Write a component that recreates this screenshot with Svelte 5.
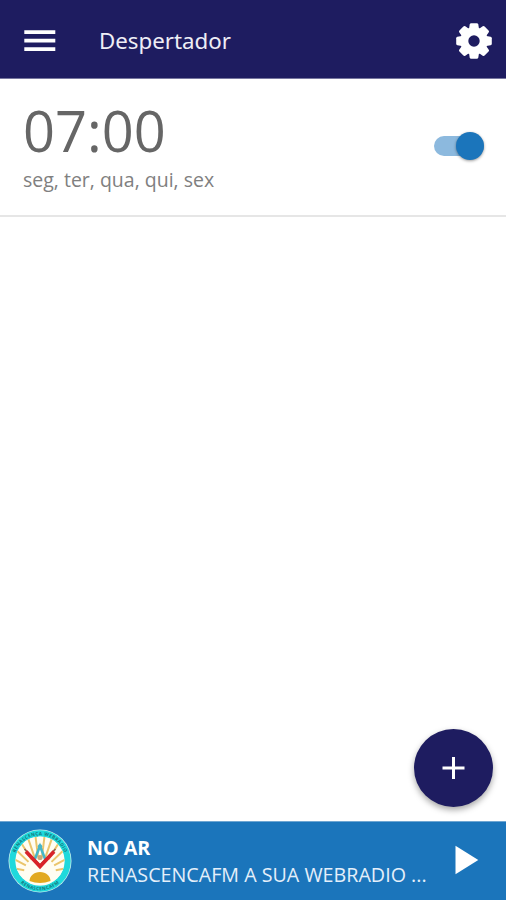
<script lang="ts">
  interface Alarm {
    time: string;
    days: string[];
    enabled: boolean;
  }

  let alarms = $state<Alarm[]>([
    { time: "07:00", days: ["seg", "ter", "qua", "qui", "sex"], enabled: true },
  ]);
  let playing = $state(false);

  const teeth = [0, 45, 90, 135, 180, 225, 270, 315];
  const rays = [-80, -62, -46, -32, -19, -7, 7, 19, 32, 46, 62, 80];

  function addAlarm() {
    alarms.push({ time: "07:00", days: ["seg"], enabled: false });
  }
</script>

<div class="screen">
  <header>
    <button class="menu" aria-label="Menu">
      <svg width="32" height="22" viewBox="0 0 32 22">
        <path d="M0.3 2.2H31.3M0.3 10.7H31.3M0.3 19.2H31.3" stroke="#fff" stroke-width="3.8" />
      </svg>
    </button>
    <h1>Despertador</h1>
    <button class="settings" aria-label="Configurações">
      <svg width="36" height="36" viewBox="-18 -18 36 36">
        {#each teeth as angle}
          <path
            d="M-5.2 -11L-4.3 -16.6Q-4 -17.8 -2.8 -17.8H2.8Q4 -17.8 4.3 -16.6L5.2 -11Z"
            fill="#fff"
            transform="rotate({angle})"
          />
        {/each}
        <circle r="9.7" fill="none" stroke="#fff" stroke-width="8" />
      </svg>
    </button>
  </header>

  <main>
    {#each alarms as alarm}
      <div class="alarm">
        <div class="info">
          <span class="time">{alarm.time}</span>
          <span class="days">{alarm.days.join(", ")}</span>
        </div>
        <button
          class="switch"
          class:on={alarm.enabled}
          role="switch"
          aria-checked={alarm.enabled}
          aria-label="Ativar alarme"
          onclick={() => (alarm.enabled = !alarm.enabled)}
        >
          <span class="thumb"></span>
        </button>
      </div>
    {/each}
  </main>

  <button class="fab" aria-label="Adicionar alarme" onclick={addAlarm}>
    <svg width="23" height="24" viewBox="0 0 23 24">
      <path d="M11.5 1V23M0.5 12H22.5" stroke="#fff" stroke-width="3" />
    </svg>
  </button>

  <footer>
    <svg class="logo" width="64" height="64" viewBox="-32 -32 64 64">
      <defs>
        <path id="ring-top" d="M-25.6 4A25.9 25.9 0 1 1 25.6 4" />
        <path id="ring-bottom" d="M-24.5 16A29.3 29.3 0 0 0 24.5 16" />
        <clipPath id="disc"><circle r="24.5" /></clipPath>
      </defs>
      <circle r="31.5" fill="#c9eeec" />
      <circle r="27.6" fill="none" stroke="#1fd9dc" stroke-width="6.2" />
      <circle r="24.5" fill="#fffdf2" />
      <g clip-path="url(#disc)">
        {#each rays as angle}
          <path d="M0 -4V-42" stroke="#eac56c" stroke-width="2" transform="rotate({angle} 0 12)" />
        {/each}
      </g>
      <path d="M-10.5 20C-10.5 15 -6 11 0 11S10.5 15 10.5 20Q0 24 -10.5 20Z" fill="#e2a91e" />
      <path d="M-5.5 -1L0 -15L5.5 -1" fill="none" stroke="#45b6c8" stroke-width="2.6" />
      <circle cy="-14.5" r="2.2" fill="#45b6c8" />
      <path d="M-15.5 -12L0 4L15.5 -12" fill="none" stroke="#8c5a58" stroke-width="1.6" />
      <path d="M-14 -9.5L0 5.5L14 -9.5" fill="none" stroke="#d8242a" stroke-width="3.8" />
      <circle cy="-3.5" r="2.6" fill="#c9a878" />
      <text class="ring-text"><textPath href="#ring-top" startOffset="50%">RENASCENÇA WEBRADIO</textPath></text>
      <text class="ring-text"><textPath href="#ring-bottom" startOffset="50%">RENASCENCAFM</textPath></text>
    </svg>
    <div class="track">
      <strong>NO AR</strong>
      <span>RENASCENCAFM A SUA WEBRADIO ...</span>
    </div>
    <button class="play" aria-label="Reproduzir" onclick={() => (playing = !playing)}>
      <svg width="24" height="30" viewBox="0 0 24 30">
        {#if playing}
          <path d="M2 1H8V29H2ZM15 1H21V29H15Z" fill="#fff" />
        {:else}
          <path d="M0.5 0.8L23.3 15L0.5 29.2Z" fill="#fff" />
        {/if}
      </svg>
    </button>
  </footer>
</div>

<style>
  :global(body) {
    margin: 0;
  }

  .screen {
    position: relative;
    display: flex;
    flex-direction: column;
    height: 900px;
    overflow: hidden;
    background: #fff;
    font-family: "Open Sans", "Noto Sans", sans-serif;
  }

  button {
    display: flex;
    padding: 0;
    border: none;
    background: none;
    cursor: pointer;
  }

  header {
    display: flex;
    align-items: center;
    box-sizing: border-box;
    height: 79px;
    padding: 3px 14px 0 24px;
    background: #1e1c60;
    border-bottom: 1px solid #77769f;
  }

  h1 {
    flex: 1;
    margin: 0 0 0 43px;
    color: #eeeef6;
    font-family: "Noto Sans", sans-serif;
    font-size: 22.3px;
    font-weight: 400;
    line-height: 30px;
  }

  main {
    flex: 1;
  }

  .alarm {
    display: flex;
    justify-content: space-between;
    box-sizing: border-box;
    height: 138px;
    padding: 19px 22px 0 23px;
    border-bottom: 2px solid #e6e6e6;
  }

  .info {
    display: flex;
    flex-direction: column;
  }

  .time {
    color: #666;
    font-size: 56px;
    line-height: 64px;
  }

  .days {
    margin-top: 5px;
    color: #808080;
    font-size: 19.5px;
    line-height: 26px;
  }

  .switch {
    width: 50px;
    height: 20px;
    margin-top: 38px;
    border-radius: 10px;
    align-items: center;
    background: #bdbdbd;
  }

  .thumb {
    width: 28px;
    height: 28px;
    flex-shrink: 0;
    border-radius: 50%;
    background: #f5f5f5;
    box-shadow: 0 1px 3px rgba(0, 0, 0, 0.4);
  }

  .switch.on {
    justify-content: flex-end;
    background: #8cb9de;
  }

  .switch.on .thumb {
    background: #1b75bb;
  }

  .fab {
    position: absolute;
    right: 13px;
    bottom: 93px;
    width: 79px;
    height: 78px;
    align-items: center;
    justify-content: center;
    border-radius: 50%;
    background: #1e1c60;
    box-shadow: 0 3px 6px rgba(0, 0, 0, 0.35);
  }

  footer {
    display: flex;
    align-items: center;
    box-sizing: border-box;
    height: 79px;
    padding: 0 27px 0 8px;
    background: #1b75bb;
    border-top: 1px solid #6fa6d2;
  }

  .ring-text {
    fill: #17767c;
    font-size: 4.6px;
    font-weight: 700;
    letter-spacing: 0.4px;
    text-anchor: middle;
  }

  .track {
    flex: 1;
    display: flex;
    flex-direction: column;
    margin-left: 15px;
    color: #e4effa;
    font-size: 19.7px;
    line-height: 27px;
    white-space: nowrap;
  }

  .track strong {
    color: #fff;
  }

  .play {
    margin-bottom: 2px;
  }
</style>
